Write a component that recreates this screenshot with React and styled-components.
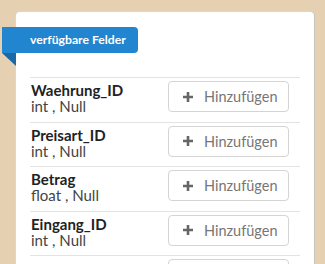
import React from 'react';
import styled, { createGlobalStyle } from 'styled-components';

const GlobalStyle = createGlobalStyle`
  html, body {
    margin: 0;
    padding: 0;
    background: #e5d0b1;
    font-family: Lato, 'Open Sans', sans-serif;
  }
`;

const fields = [
  { name: 'Waehrung_ID', type: 'int', nullable: 'Null' },
  { name: 'Preisart_ID', type: 'int', nullable: 'Null' },
  { name: 'Betrag', type: 'float', nullable: 'Null' },
  { name: 'Eingang_ID', type: 'int', nullable: 'Null' },
  { name: null },
];

const PlusIcon = () => (
  <svg width="10" height="10" viewBox="0 0 10 10">
    <path d="M5 0v10M0 5h10" stroke="#666" strokeWidth="2.6" />
  </svg>
);

const App = () => (
  <Page>
    <GlobalStyle />
    <Card>
      <Ribbon>verfügbare Felder</Ribbon>
      <FieldList>
        {fields.map((f, i) => (
          <FieldRow key={i}>
            <FieldInfo>
              {f.name && (
                <>
                  <FieldName>{f.name}</FieldName>
                  <FieldMeta>{f.type} , {f.nullable}</FieldMeta>
                </>
              )}
            </FieldInfo>
            <AddButton>
              <PlusIcon />
              Hinzufügen
            </AddButton>
          </FieldRow>
        ))}
      </FieldList>
    </Card>
  </Page>
);

const Page = styled.div`
  width: 325px;
  height: 264px;
  overflow: hidden;
  padding: 12px 11px 0 16px;
  box-sizing: border-box;
`;

const Card = styled.div`
  position: relative;
  background: #fff;
  border-radius: 4px;
  box-shadow: 1px 0 0 #c9c4bc, 0 0 0 1px #ddd6cb;
  height: 300px;
  padding: 15px 14px 0 14px;
`;

const Ribbon = styled.div`
  position: relative;
  margin-left: -28px;
  width: 136px;
  height: 26px;
  box-sizing: border-box;
  background: #2185d0;
  color: #fff;
  font-size: 12.2px;
  font-weight: 700;
  line-height: 26px;
  padding-left: 28px;
  border-radius: 0 4px 4px 0;

  &::after {
    content: '';
    position: absolute;
    left: 0;
    top: 100%;
    border-style: solid;
    border-width: 0 14px 13px 0;
    border-color: transparent #1a69a4 transparent transparent;
  }
`;

const FieldList = styled.div`
  margin-top: 24px;
`;

const FieldRow = styled.div`
  display: flex;
  align-items: flex-start;
  justify-content: space-between;
  height: 44.5px;
  box-sizing: border-box;
  border-top: 1px solid #e3e3e3;
  padding: 3px 11px 0 1px;
`;

const FieldInfo = styled.div`
  display: flex;
  flex-direction: column;
  padding-top: 1px;
`;

const FieldName = styled.span`
  font-size: 15px;
  font-weight: 700;
  color: #222;
  line-height: 16px;
`;

const FieldMeta = styled.span`
  font-size: 15px;
  color: #444;
  line-height: 16px;
`;

const AddButton = styled.button`
  display: flex;
  align-items: center;
  gap: 11px;
  width: 121px;
  height: 31px;
  box-sizing: border-box;
  padding: 0 0 0 14px;
  background: #fff;
  border: 1px solid #d4d4d5;
  border-radius: 4px;
  font-family: Lato, 'Open Sans', sans-serif;
  font-size: 14.5px;
  color: #767676;
`;

export default App;
